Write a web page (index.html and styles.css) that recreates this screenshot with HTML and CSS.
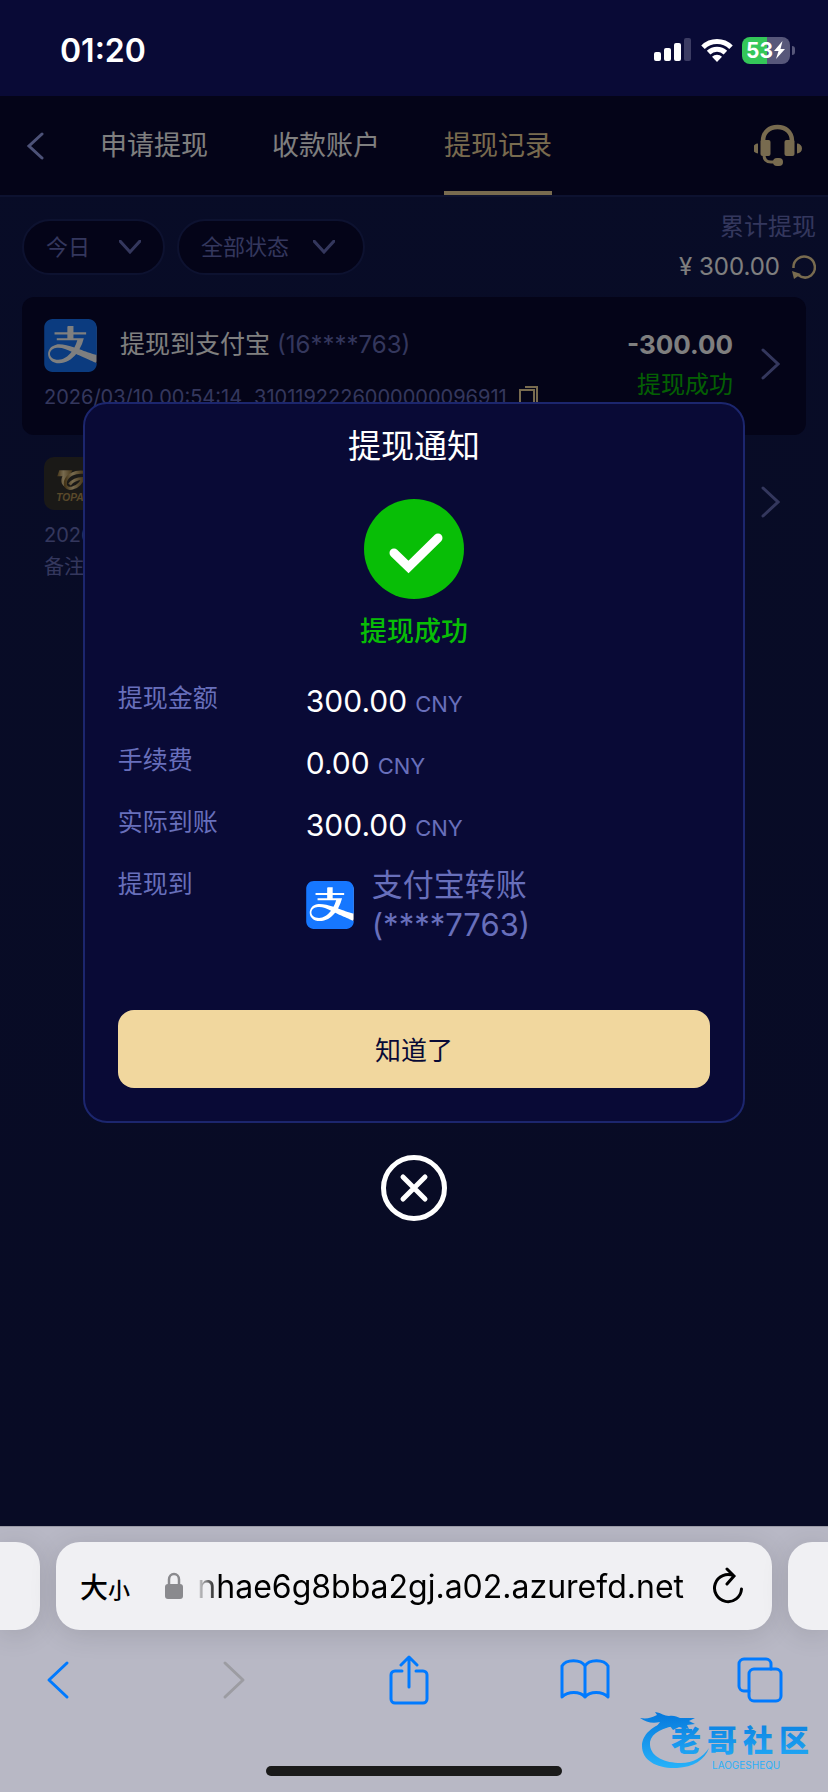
FILE: index.html
```html
<!DOCTYPE html>
<html lang="zh-CN">
<head>
    <meta charset="UTF-8">
    <meta name="viewport" content="width=device-width, initial-scale=1.0">
    <title>提现记录</title>
    <link rel="stylesheet" href="styles.css">
</head>
<body>
    <!-- shared logo -->
    <svg class="defs" aria-hidden="true">
        <symbol id="alipay" viewBox="0 0 24 24">
            <rect x="1" y="1" width="22.8" height="21" rx="3" fill="#fff"/>
            <path fill="#1677ff" d="M19.695 15.07c3.426 1.158 4.203 1.22 4.203 1.22V3.846c0-2.124-1.705-3.845-3.81-3.845H3.914C1.808.001.102 1.722.102 3.846v16.31c0 2.123 1.706 3.845 3.813 3.845h16.173c2.105 0 3.81-1.722 3.81-3.845v-.157s-6.19-2.602-9.315-4.119c-2.096 2.602-4.8 4.181-7.607 4.181-4.75 0-6.361-4.19-4.112-6.949.49-.602 1.324-1.175 2.617-1.497 2.025-.502 5.247.313 8.266 1.317a16.796 16.796 0 0 0 1.341-3.302H5.781v-.952h4.799V6.975H4.77v-.953h5.81V3.591s0-.409.411-.409h2.347v2.84h5.744v.951h-5.744v1.704h4.69a19.453 19.453 0 0 1-1.986 5.06c1.424.52 2.702 1.011 3.654 1.333m-13.81-2.032c-.596.06-1.71.325-2.321.869-1.83 1.608-.735 4.55 2.968 4.55 2.151 0 4.301-1.388 5.99-3.61-2.403-1.182-4.438-2.028-6.637-1.809"/>
        </symbol>
    </svg>

    <div class="status-bar">
        <span class="time">01:20</span>
        <div class="status-icons">
            <svg width="38" height="24" viewBox="0 0 38 24" fill="#fff">
                <rect x="0" y="14" width="7" height="9" rx="2"/>
                <rect x="10" y="10" width="7" height="13" rx="2"/>
                <rect x="20" y="5" width="7" height="18" rx="2"/>
                <rect x="30" y="0" width="7" height="23" rx="2" fill="#3c3c63"/>
            </svg>
            <svg width="32" height="24" viewBox="0 0 32 24">
                <g fill="none" stroke="#fff" stroke-width="5">
                    <path d="M2 9.200a20 20 0 0 1 28 0"/>
                    <path d="M7.600 14.600a12 12 0 0 1 16.800 0"/>
                </g>
                <path fill="#fff" d="M16 24l-5-5.200a7 7 0 0 1 10 0z"/>
            </svg>
            <div class="battery">
                <span>53</span>
                <svg width="13" height="18" viewBox="0 0 13 18"><path fill="#fff" d="M9.500 0L1 10h4.500L3 18l9-10H7.500z"/></svg>
            </div>
        </div>
    </div>

    <main class="app">
        <nav class="top-nav">
            <button class="icon-btn back" aria-label="返回">
                <svg width="18" height="28" viewBox="0 0 18 28"><path d="M16 2L3 14l13 12" fill="none" stroke="#9aa5f0" stroke-width="3" stroke-linecap="round"/></svg>
            </button>
            <div class="tabs">
                <a href="#apply">申请提现</a>
                <a href="#account">收款账户</a>
                <a href="#history" class="active">提现记录</a>
            </div>
            <button class="icon-btn service" aria-label="客服">
                <svg width="48" height="43" viewBox="0 0 48 43" fill="#f0d69e">
                    <path d="M9 18v-1C9 8 15.500 3 23.500 3S38 8 38 17v1" fill="none" stroke="#f0d69e" stroke-width="4.500"/>
                    <rect x="6.500" y="16" width="10" height="16" rx="2"/>
                    <rect x="30.500" y="16" width="10" height="16" rx="2"/>
                    <path d="M4 19.500v10a5 5 0 0 1 0-10zM43 19.500v10a5 5 0 0 0 0-10z"/>
                    <path d="M10 31c0 5 3 7 7 7h4" fill="none" stroke="#f0d69e" stroke-width="3"/>
                    <rect x="19" y="34" width="10" height="8" rx="4"/>
                </svg>
            </button>
        </nav>

        <section class="filters">
            <div class="filter day">
                <select aria-label="日期"><option>今日</option></select>
                <svg width="22" height="14" viewBox="0 0 22 14"><path d="M1 1l10 11L21 1"/></svg>
            </div>
            <div class="filter state">
                <select aria-label="状态"><option>全部状态</option></select>
                <svg width="22" height="14" viewBox="0 0 22 14"><path d="M1 1l10 11L21 1"/></svg>
            </div>
            <div class="total">
                <div class="total-label">累计提现</div>
                <div class="total-value">
                    <span>¥ 300.00</span>
                    <button class="icon-btn" aria-label="刷新">
                        <svg width="24" height="24" viewBox="0 0 24 24"><path d="M1.500 13A10.700 10.700 0 1 1 19 20.500Q13 25 6 20" fill="none" stroke="#f0d69e" stroke-width="2.500"/><path d="M0 16l2 8 7-5z" fill="#f0d69e"/></svg>
                    </button>
                </div>
            </div>
        </section>

        <section class="records">
            <article class="record filled">
                <div class="record-main">
                    <div class="record-title">
                        <svg class="pay-icon"><use href="#alipay"/></svg>
                        <span>提现到支付宝 <em>(16****763)</em></span>
                    </div>
                    <div class="record-meta">
                        <span>2026/03/10 00:54:14</span>
                        <span>3101192226000000096911</span>
                        <button class="icon-btn" aria-label="复制">
                            <svg width="20" height="22" viewBox="0 0 20 22" fill="none" stroke="#f0d69e" stroke-width="2"><path d="M1 4h14v17H1zM6 1h12v18"/></svg>
                        </button>
                    </div>
                </div>
                <div class="record-side">
                    <div class="amount">-300.00</div>
                    <div class="state-text">提现成功</div>
                </div>
                <svg class="arrow" width="19" height="32" viewBox="0 0 19 32"><path d="M2 2l15 14L2 30"/></svg>
            </article>
            <article class="record">
                <div class="record-main">
                    <div class="record-title">
                        <svg class="pay-icon" viewBox="0 0 52 52">
                            <defs>
                                <linearGradient id="gold" x1="0" x2="1">
                                    <stop offset="0" stop-color="#8a6a30"/>
                                    <stop offset=".4" stop-color="#f0d69e"/>
                                    <stop offset="1" stop-color="#8a6a30"/>
                                </linearGradient>
                            </defs>
                            <rect width="52" height="52" rx="10" fill="#35332f"/>
                            <path fill="url(#gold)" d="M15 13h13l-3 5c-3 4-4 8-3 12-5-2-6-6-4-11h-5z"/>
                            <path fill="none" stroke="url(#gold)" stroke-width="3" d="M39 15c-9-1-16 3-18 9-1 6 3 8 8 6 4-1 8-5 9-9-6 0-10 2-13 6"/>
                            <text x="12" y="43" class="topay">TOPAY</text>
                        </svg>
                    </div>
                    <div class="record-meta"><span>2026</span></div>
                    <div class="record-meta note"><span>备注</span></div>
                </div>
                <svg class="arrow" width="19" height="32" viewBox="0 0 19 32"><path d="M2 2l15 14L2 30"/></svg>
            </article>
        </section>

        <div class="overlay">
            <div class="modal" role="dialog" aria-labelledby="modal-title">
                <h2 id="modal-title">提现通知</h2>
                <svg class="check" width="100" height="100" viewBox="0 0 100 100">
                    <circle cx="50" cy="50" r="50" fill="#08be06"/>
                    <path d="M30 54l14.500 14L74 39" fill="none" stroke="#fff" stroke-width="9" stroke-linecap="round"/>
                </svg>
                <p class="result">提现成功</p>
                <dl class="details">
                    <dt>提现金额</dt>
                    <dd>300.00<small>CNY</small></dd>
                    <dt>手续费</dt>
                    <dd>0.00<small>CNY</small></dd>
                    <dt>实际到账</dt>
                    <dd>300.00<small>CNY</small></dd>
                    <dt>提现到</dt>
                    <dd class="target">
                        <svg width="48" height="48"><use href="#alipay"/></svg>
                        <div>支付宝转账<br>(****7763)</div>
                    </dd>
                </dl>
                <button class="confirm">知道了</button>
            </div>
            <button class="icon-btn" aria-label="关闭">
                <svg width="66" height="66" viewBox="0 0 66 66" fill="none" stroke="#fff">
                    <circle cx="33" cy="33" r="30.500" stroke-width="5"/>
                    <path d="M22 22l22 22M44 22L22 44" stroke-width="5" stroke-linecap="round"/>
                </svg>
            </button>
        </div>
    </main>

    <footer class="browser">
        <div class="address-row">
            <div class="page-tab left"></div>
            <div class="address">
                <button class="text-size" aria-label="文字大小">大<small>小</small></button>
                <svg width="18" height="28" viewBox="0 0 18 28"><path d="M4 13V7.500a5 5.500 0 0 1 10 0V13" fill="none" stroke="#8a8a8e" stroke-width="2.500"/><rect y="12" width="18" height="15" rx="3" fill="#8a8a8e"/></svg>
                <input type="text" aria-label="网址" value="nhae6g8bba2gj.a02.azurefd.net">
                <button class="icon-btn" aria-label="重新载入">
                    <svg width="32" height="38" viewBox="0 0 32 38" fill="none" stroke="#000" stroke-width="3" stroke-linecap="round"><path d="M22 9A13.500 13.500 0 1 0 29.500 22M15 2l7 7-7 8"/></svg>
                </button>
            </div>
            <div class="page-tab right"></div>
        </div>
        <div class="toolbar">
            <button class="icon-btn" aria-label="后退"><svg width="24" height="40" viewBox="0 0 24 40"><path d="M21 3L3 20l18 17"/></svg></button>
            <button class="icon-btn forward" aria-label="前进"><svg width="24" height="40" viewBox="0 0 24 40"><path d="M3 3l18 17L3 37"/></svg></button>
            <button class="icon-btn" aria-label="分享"><svg width="40" height="50" viewBox="0 0 40 50"><path d="M13 16H6a4 4 0 0 0-4 4v24a4 4 0 0 0 4 4h28a4 4 0 0 0 4-4V20a4 4 0 0 0-4-4h-7M20 32V3M12 10l8-8 8 8"/></svg></button>
            <button class="icon-btn" aria-label="书签"><svg width="50" height="42" viewBox="0 0 50 42"><path d="M25 7C21 0 6 0 2 7v31c6-6 18-6 23 0 5-6 17-6 23 0V7C44 0 29 0 25 7zM25 7v31"/></svg></button>
            <button class="icon-btn" aria-label="标签页"><svg width="46" height="46" viewBox="0 0 46 46"><path d="M12 34H7a5 5 0 0 1-5-5V7a5 5 0 0 1 5-5h22a5 5 0 0 1 5 5v5"/><rect x="12" y="12" width="32" height="32" rx="5"/></svg></button>
        </div>
        <div class="home-indicator"></div>
        <svg class="watermark" width="176" height="60" viewBox="0 0 176 60">
            <defs>
                <linearGradient id="blue" x1="0" y1="0" x2="0" y2="60" gradientUnits="userSpaceOnUse">
                    <stop offset="0" stop-color="#0678dc"/>
                    <stop offset="1" stop-color="#29b6fc"/>
                </linearGradient>
            </defs>
            <g fill="url(#blue)">
                <path d="M30 9C12 13 2 23 2 34c0 15 16 23 35 22 16-1 28-8 32-20-6 9-16 15-28 15-16 0-30-6-31-18-1-9 8-16 24-19z"/>
                <path d="M0 6c7 1 11 0 17-3l-2-3c7 1 9 4 14 4 5-1 8 1 11 2h15l-6 3 6 3-8 1 2 4-10-2-6 3-3-4-8 3 1-4-6 1 3-4C12 12 6 10 0 6z"/>
                <text x="31 67 103 139" y="39" class="mark">老哥社区</text>
                <text x="72" y="57" class="mark-sub">LAOGESHEQU</text>
            </g>
        </svg>
    </footer>
</body>
</html>
```
FILE: styles.css
```css
* {
    box-sizing: border-box;
    font-family: Inter, "Noto Sans CJK SC", sans-serif;
}

body {
    margin: 0;
    min-height: 100vh;
    display: flex;
    flex-direction: column;
    background-color: #090a36;
    color: #fff;
}

button, select, input {
    border: none;
    padding: 0;
    background: none;
    color: inherit;
}

svg {
    display: block;
    flex-shrink: 0;
}

.defs {
    position: absolute;
    width: 0;
    height: 0;
}

.icon-btn {
    display: flex;
    cursor: pointer;
}

/* phone status bar */
.status-bar {
    height: 96px;
    padding: 4px 35px 0 60px;
    display: flex;
    justify-content: space-between;
    align-items: center;
}

.time {
    font-size: 32px;
    font-weight: 600;
}

.status-icons {
    display: flex;
    align-items: center;
    gap: 9px;
}

.battery {
    position: relative;
    display: flex;
    align-items: center;
    justify-content: center;
    width: 48px;
    height: 27px;
    margin-right: 3px;
    border-radius: 8px;
    background: linear-gradient(90deg, #34c759 52%, #57577a 52%);
    font-size: 21px;
    font-weight: 700;
}

.battery::after {
    content: "";
    position: absolute;
    left: 50px;
    width: 3px;
    height: 9px;
    border-radius: 0 4px 4px 0;
    background-color: #57577a;
}

/* page */
.app {
    position: relative;
    flex: 1;
    background: linear-gradient(#10184e, #10174a);
}

.top-nav {
    display: flex;
    align-items: center;
    height: 101px;
    padding: 0 26px;
    background-color: #080830;
    border-bottom: 2px solid #1b2460;
}

.tabs {
    display: flex;
    flex: 1;
    align-self: stretch;
    gap: 64px;
    margin-left: 56px;
}

.tabs a {
    display: flex;
    align-items: center;
    border-bottom: 4px solid transparent;
    font-size: 27px;
    color: #fff;
    text-decoration: none;
}

.tabs .active {
    color: #f0d69e;
    border-bottom-color: #f0d69e;
}

.filters {
    display: flex;
    align-items: center;
    gap: 12px;
    padding: 10px 12px 10px 22px;
}

.filter {
    display: flex;
    align-items: center;
    height: 56px;
    padding: 0 22px;
    border: 2px solid #1b2460;
    border-radius: 28px;
    background-color: #080830;
    color: #686fbb;
}

.filter.day {
    width: 143px;
}

.filter.state {
    width: 188px;
    padding-right: 28px;
}

.filter select {
    flex: 1;
    min-width: 0;
    appearance: none;
    font-size: 22px;
}

.filter path, .arrow path {
    fill: none;
    stroke: #686fbb;
    stroke-width: 3;
    stroke-linecap: round;
}

.total {
    margin-left: auto;
    text-align: right;
    font-size: 24px;
    line-height: 40px;
}

.total-label {
    color: #686fbb;
}

.total-value {
    display: flex;
    align-items: center;
    justify-content: flex-end;
    gap: 12px;
}

.records {
    padding: 0 22px;
}

.record {
    display: flex;
    padding: 22px 26px 22px 22px;
    border-radius: 12px;
}

.record.filled {
    height: 138px;
    background-color: #080830;
}

.record-main {
    flex: 1;
}

.record-title {
    display: flex;
    gap: 23px;
    font-size: 25px;
    line-height: 50px;
}

.record-title em {
    font-size: 24px;
    font-style: normal;
    color: #686fbb;
}

.pay-icon {
    width: 53px;
    height: 53px;
}

.topay {
    font-size: 10px;
    font-weight: 700;
    font-style: italic;
    font-family: "Liberation Sans", sans-serif;
    fill: #b39255;
}

.record-meta {
    display: flex;
    align-items: center;
    gap: 12px;
    margin-top: 8px;
    font-size: 20px;
    line-height: 32px;
    color: #686fbb;
}

.record-title + .record-meta {
    margin-top: 9px;
}

.record-meta.note {
    margin-top: 0;
}

.record-side {
    text-align: right;
    line-height: 40px;
    margin-top: 6px;
}

.amount {
    font-size: 26px;
    font-weight: 700;
}

.state-text {
    font-size: 24px;
    color: #08be06;
}

.arrow {
    margin: 29px 0 0 28px;
}

/* dialog */
.overlay {
    position: absolute;
    inset: 0;
    display: flex;
    flex-direction: column;
    align-items: center;
    justify-content: center;
    gap: 32px;
    background-color: rgba(0, 0, 0, 0.5);
}

.modal {
    width: 80%;
    padding: 20px 33px 33px;
    border: 2px solid #1c266e;
    border-radius: 24px;
    background-color: #090a36;
}

.modal h2 {
    margin: 0 0 31px;
    font-size: 33px;
    font-weight: 400;
    line-height: 44px;
    text-align: center;
}

.check {
    margin: 0 auto;
}

.result {
    margin: 15px 0 29px;
    font-size: 27px;
    font-weight: 500;
    line-height: 36px;
    text-align: center;
    color: #08be06;
}

.details {
    display: grid;
    grid-template-columns: 188px 1fr;
    row-gap: 18px;
    margin: 0 0 65px;
}

.details dt {
    font-size: 25px;
    line-height: 38px;
    color: #686fbb;
}

.details dd {
    display: flex;
    align-items: baseline;
    gap: 8px;
    margin: 0;
    font-size: 30px;
    line-height: 44px;
}

.details small {
    font-size: 22px;
    line-height: 30px;
    color: #686fbb;
}

.details .target {
    align-items: center;
    gap: 18px;
    font-size: 31px;
    line-height: 40px;
    color: #686fbb;
}

.confirm {
    display: block;
    width: 100%;
    height: 78px;
    border-radius: 16px;
    background-color: #f1d79e;
    color: #090a36;
    font-size: 26px;
    cursor: pointer;
}

/* browser chrome */
.browser {
    position: relative;
    height: 266px;
    padding-top: 15px;
    border-top: 1px solid #9a9aa6;
    background-color: #b8b8c5;
    color: #000;
    overflow: hidden;
}

.address-row {
    display: grid;
    grid-template-columns: 40px 1fr 40px;
    gap: 16px;
    height: 88px;
}

.address, .page-tab {
    background-color: #f0f0f3;
    border-radius: 24px;
    box-shadow: 0 4px 28px rgba(0, 0, 0, 0.12);
}

.page-tab.left {
    border-radius: 0 24px 24px 0;
}

.page-tab.right {
    border-radius: 24px 0 0 24px;
}

.address {
    display: flex;
    align-items: center;
    padding: 0 28px 0 24px;
}

.text-size {
    margin-right: 35px;
    font-size: 28px;
    font-weight: 500;
}

.text-size small {
    font-size: 22px;
}

.address input {
    flex: 1;
    min-width: 0;
    margin: 0 28px 0 12px;
    font-size: 32px;
    text-align: right;
    mask-image: linear-gradient(90deg, transparent, #000 24px);
}

.toolbar {
    display: flex;
    justify-content: space-between;
    align-items: center;
    height: 50px;
    margin-top: 25px;
    padding: 0 44px 0 34px;
}

.toolbar .icon-btn {
    justify-content: center;
    width: 48px;
}

.toolbar svg {
    fill: none;
    stroke: #007aff;
    stroke-width: 3;
    stroke-linecap: round;
    stroke-linejoin: round;
}

.toolbar .forward svg {
    stroke: #9c9ca2;
}

.home-indicator {
    width: 296px;
    height: 10px;
    margin: 61px auto 0;
    border-radius: 5px;
    background-color: #1a1a1a;
}

.watermark {
    position: absolute;
    right: 12px;
    bottom: 20px;
}

.mark {
    font-size: 30px;
    font-weight: 900;
}

.mark-sub {
    font-size: 10px;
}
```
